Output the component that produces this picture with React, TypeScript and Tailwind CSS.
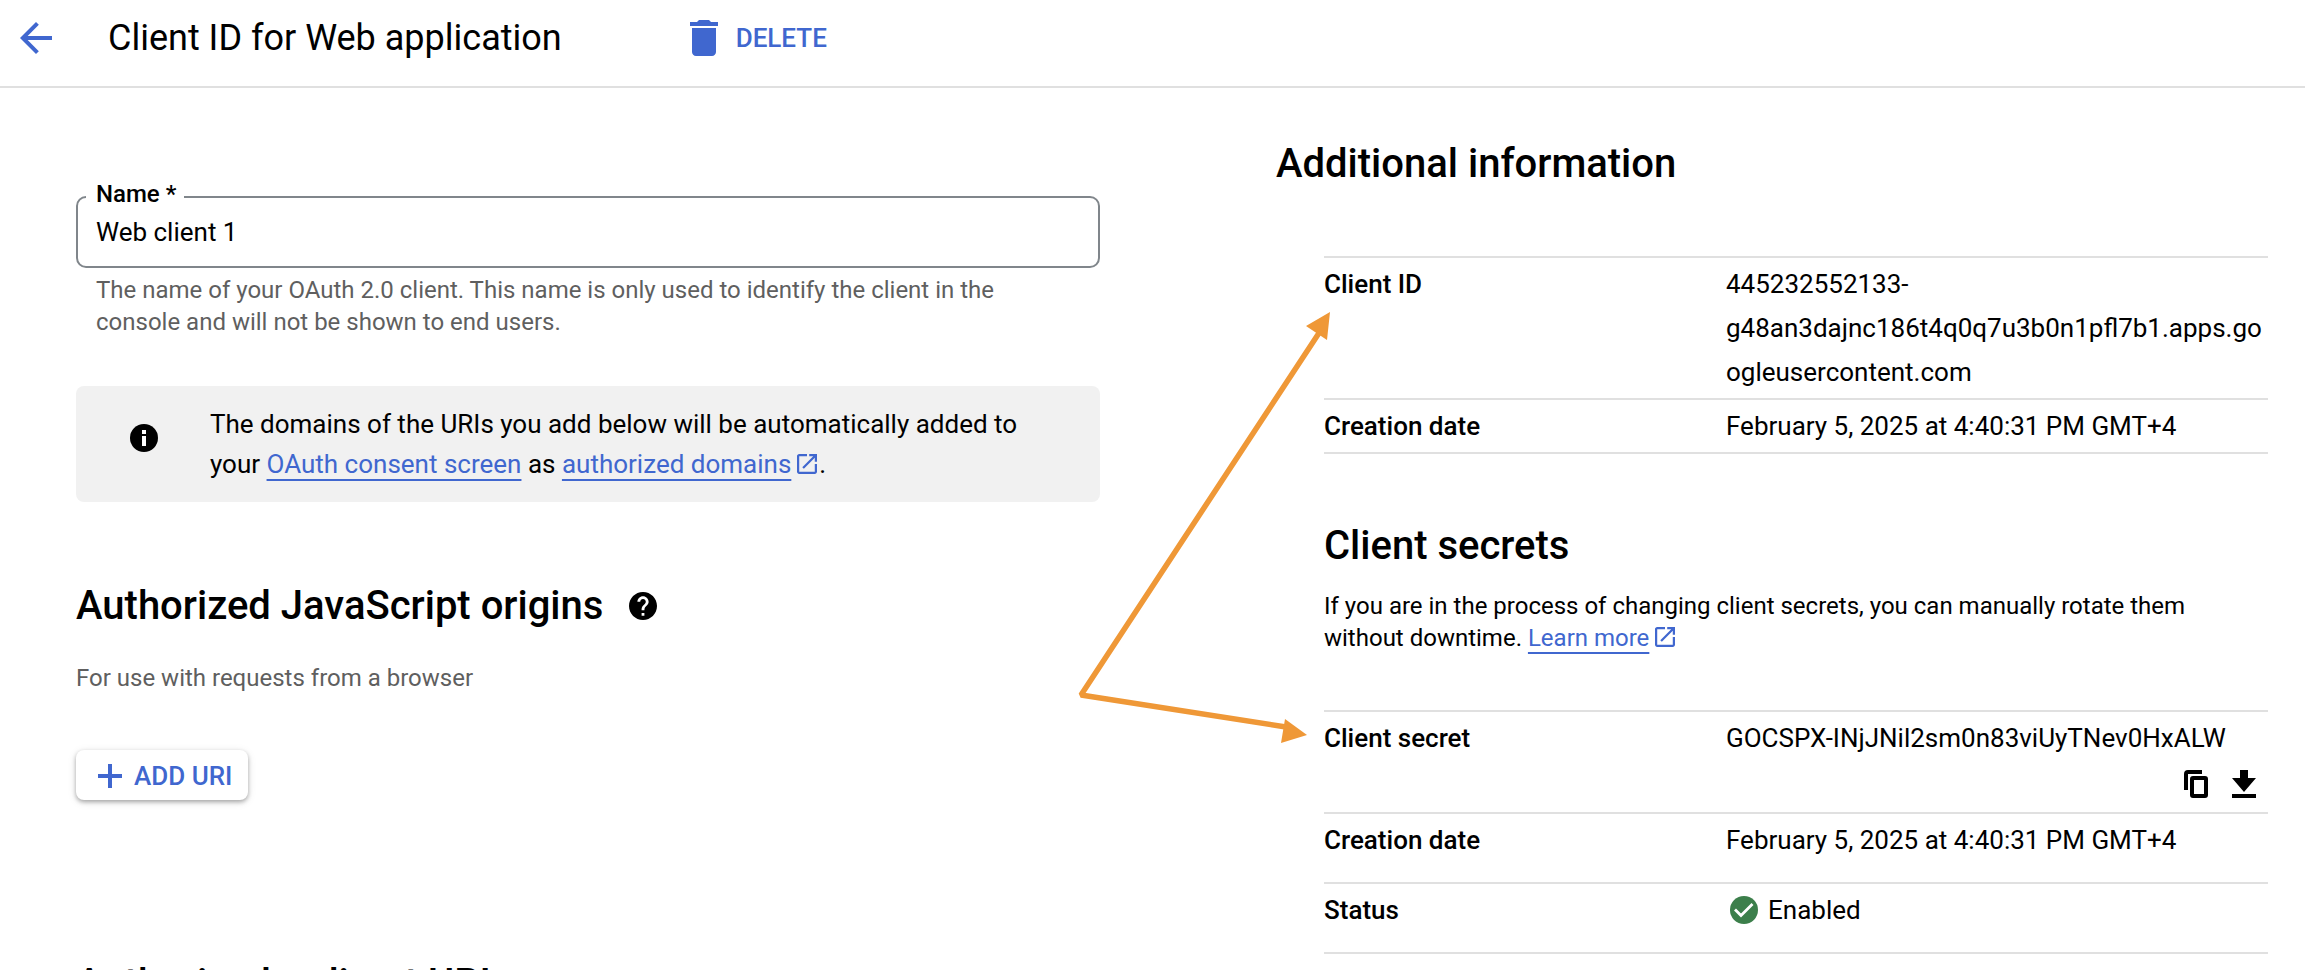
/**
 * OAuth Client Page
 * Edit form for a web application client, with its IDs and secrets
 */

import { useState } from 'react'
import type { ReactNode } from 'react'

function ExternalIcon() {
  return (
    <svg
      className="inline-block w-5 h-5 ml-1.5 mr-0.5 align-[-1px] text-[#4067cf]"
      viewBox="3 3 18 18"
      fill="currentColor"
    >
      <path d="M19 19H5V5h7V3H5c-1.11 0-2 .9-2 2v14c0 1.1.89 2 2 2h14c1.1 0 2-.9 2-2v-7h-2v7zM14 3v2h3.59l-9.83 9.83 1.41 1.41L19 6.41V10h2V3h-7z" />
    </svg>
  )
}

function TextLink({ children, external }: { children: ReactNode; external?: boolean }) {
  return (
    <>
      <a
        href="#"
        className="text-[#4067cf] underline decoration-2 underline-offset-[6px] [text-decoration-skip-ink:none]"
      >
        {children}
      </a>
      {external && <ExternalIcon />}
    </>
  )
}

interface DetailRowProps {
  label: string
  tall?: boolean
  children: ReactNode
}

function DetailRow({ label, tall, children }: DetailRowProps) {
  return (
    <tr className="border-y-2 border-[#e0e0e0] align-top">
      <th scope="row" className={tall ? 'pt-1 pb-5 text-left font-medium' : 'py-1 text-left font-medium'}>
        {label}
      </th>
      <td className={tall ? 'pt-1 pb-5 break-words' : 'py-1 break-words'}>{children}</td>
    </tr>
  )
}

function DetailTable({ children }: { children: ReactNode }) {
  return (
    <table className="w-full table-fixed border-collapse text-[26px] leading-[44px]">
      <colgroup>
        <col className="w-[402px]" />
        <col />
      </colgroup>
      <tbody>{children}</tbody>
    </table>
  )
}

export default function App() {
  const [name, setName] = useState('Web client 1')

  return (
    <div className="h-screen overflow-hidden bg-white text-black font-[Roboto,sans-serif]">
      {/* Header */}
      <header className="flex items-center border-b-2 border-[#e0e0e0] pt-3.5 pb-6 pl-3">
        <button type="button" aria-label="Back" className="text-[#4067cf]">
          <svg className="w-12 h-12" viewBox="0 0 24 24" fill="currentColor">
            <path d="M20 11H7.83l5.59-5.59L12 4l-8 8 8 8 1.41-1.41L7.83 13H20v-2z" />
          </svg>
        </button>
        <h1 className="ml-12 text-[36px] leading-[48px]">Client ID for Web application</h1>
        <button
          type="button"
          className="ml-[118px] flex items-center gap-2 text-[26px] leading-[48px] font-medium text-[#4067cf]"
        >
          <svg className="w-12 h-12" viewBox="0 0 24 24" fill="currentColor">
            <path d="M6 19c0 1.1.9 2 2 2h8c1.1 0 2-.9 2-2V7H6v12zM19 4h-3.5l-1-1h-5l-1 1H5v2h14V4z" />
          </svg>
          DELETE
        </button>
      </header>

      <div className="grid grid-cols-[1024fr_992fr] gap-[176px] pl-[76px] pr-[37px]">
        {/* Form */}
        <main className="pt-[108px]">
          <div className="relative">
            <label
              htmlFor="client-name"
              className="absolute left-2.5 -top-4 pl-2.5 pr-2 bg-white text-[24px] leading-[28px] font-medium"
            >
              Name *
            </label>
            <input
              id="client-name"
              type="text"
              value={name}
              onChange={(e) => setName(e.target.value)}
              className="block w-full h-[72px] px-[18px] border-2 border-[#80868b] rounded-[10px] text-[26px] outline-none"
            />
          </div>
          <p className="mt-1.5 px-5 text-[24px] leading-[32px] text-[#5f5f5f]">
            The name of your OAuth 2.0 client. This name is only used to identify the client in the
            console and will not be shown to end users.
          </p>

          {/* Notice */}
          <div className="mt-12 flex items-start gap-[52px] rounded-lg bg-[#f1f1f1] py-[18px] pl-[54px] pr-16">
            <svg className="w-7 h-7 mt-5 shrink-0" viewBox="0 0 14 14">
              <circle cx="7" cy="7" r="7" />
              <path fill="#fff" d="M6 3h2v2H6zM6 6h2v5H6z" />
            </svg>
            <p className="text-[26px] leading-[40px]">
              The domains of the URIs you add below will be automatically added to your{' '}
              <TextLink>OAuth consent screen</TextLink> as{' '}
              <TextLink external>authorized domains</TextLink>.
            </p>
          </div>

          {/* Origins */}
          <section>
            <div className="mt-20 flex items-center gap-[26px]">
              <h2 className="text-[40px] leading-[48px] font-medium">Authorized JavaScript origins</h2>
              <button type="button" aria-label="Help">
                <svg className="w-7 h-7" viewBox="2 2 20 20" fill="currentColor">
                  <path d="M12 2C6.48 2 2 6.48 2 12s4.48 10 10 10 10-4.48 10-10S17.52 2 12 2zm1 17h-2v-2h2v2zm2.07-7.75l-.9.92C13.45 12.9 13 13.5 13 15h-2v-.5c0-1.1.45-2.1 1.17-2.83l1.24-1.26c.37-.36.59-.86.59-1.41 0-1.1-.9-2-2-2s-2 .9-2 2H8c0-2.21 1.79-4 4-4s4 1.79 4 4c0 .88-.36 1.68-.93 2.25z" />
                </svg>
              </button>
            </div>
            <p className="mt-8 text-[24px] leading-[32px] text-[#5f5f5f]">
              For use with requests from a browser
            </p>
            <button
              type="button"
              className="mt-14 flex items-center gap-3 h-[50px] pl-[22px] pr-4 pt-0.5 rounded-lg bg-white text-[26px] leading-[48px] font-medium text-[#4067cf] shadow-[0_2px_4px_rgba(0,0,0,0.3),0_2px_10px_rgba(0,0,0,0.1)]"
            >
              <svg className="w-6 h-6" viewBox="0 0 24 24" fill="currentColor">
                <path d="M10 0h4v10h10v4H14v10h-4V14H0v-4h10z" />
              </svg>
              ADD URI
            </button>
          </section>

          {/* Redirect URIs */}
          <h2 className="mt-40 text-[40px] leading-[48px] font-medium">Authorized redirect URIs</h2>
        </main>

        {/* Details */}
        <aside className="relative pt-[52px]">
          <h2 className="text-[40px] leading-[48px] font-medium">Additional information</h2>
          <div className="mt-[68px] pl-12">
            <DetailTable>
              <DetailRow label="Client ID">
                445232552133-g48an3dajnc186t4q0q7u3b0n1pfl7b1.apps.googleusercontent.com
              </DetailRow>
              <DetailRow label="Creation date">February 5, 2025 at 4:40:31 PM GMT+4</DetailRow>
            </DetailTable>

            <h2 className="mt-[68px] text-[40px] leading-[48px] font-medium">Client secrets</h2>
            <p className="mt-5 mb-14 pr-16 text-[24px] leading-[32px]">
              If you are in the process of changing client secrets, you can manually rotate them
              without downtime. <TextLink external>Learn more</TextLink>
            </p>

            <DetailTable>
              <DetailRow label="Client secret">
                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
                <div className="flex h-12 items-center justify-end gap-6 pr-3">
                  <button type="button" aria-label="Copy client secret">
                    <svg className="w-6 h-7" viewBox="0 0 24 28" fill="none" stroke="#000" strokeWidth="4">
                      <path d="M18 2H4a2 2 0 0 0-2 2v16" />
                      <rect x="8" y="8" width="14" height="18" rx="1" />
                    </svg>
                  </button>
                  <button type="button" aria-label="Download client secret">
                    <svg className="w-6 h-7" viewBox="0 0 24 28" fill="currentColor">
                      <path d="M8 0h8v8h8L12 22 0 8h8zM0 24h24v4H0z" />
                    </svg>
                  </button>
                </div>
              </DetailRow>
              <DetailRow label="Creation date" tall>
                February 5, 2025 at 4:40:31 PM GMT+4
              </DetailRow>
              <DetailRow label="Status" tall>
                <span className="flex items-center gap-2.5 pl-1">
                  <svg className="w-7 h-7" viewBox="0 0 28 28">
                    <circle cx="14" cy="14" r="14" fill="#3c7f4b" />
                    <path d="M5 13.5l6 6L22.5 8" fill="none" stroke="#fff" strokeWidth="2.8" />
                  </svg>
                  Enabled
                </span>
              </DetailRow>
            </DetailTable>
          </div>

          {/* Arrows pointing at the client ID and the client secret */}
          <svg
            className="absolute -left-[200px] top-[212px] w-[264px] h-[450px] pointer-events-none"
            viewBox="0 0 264 450"
            fill="#ef9837"
          >
            <path d="M243 33L5 395l205 32" fill="none" stroke="#ef9837" strokeWidth="5.500" strokeLinejoin="bevel" />
            <path d="M254 12l-3 28-21-14zM231 435l-22-16-4 24z" />
          </svg>
        </aside>
      </div>
    </div>
  )
}
